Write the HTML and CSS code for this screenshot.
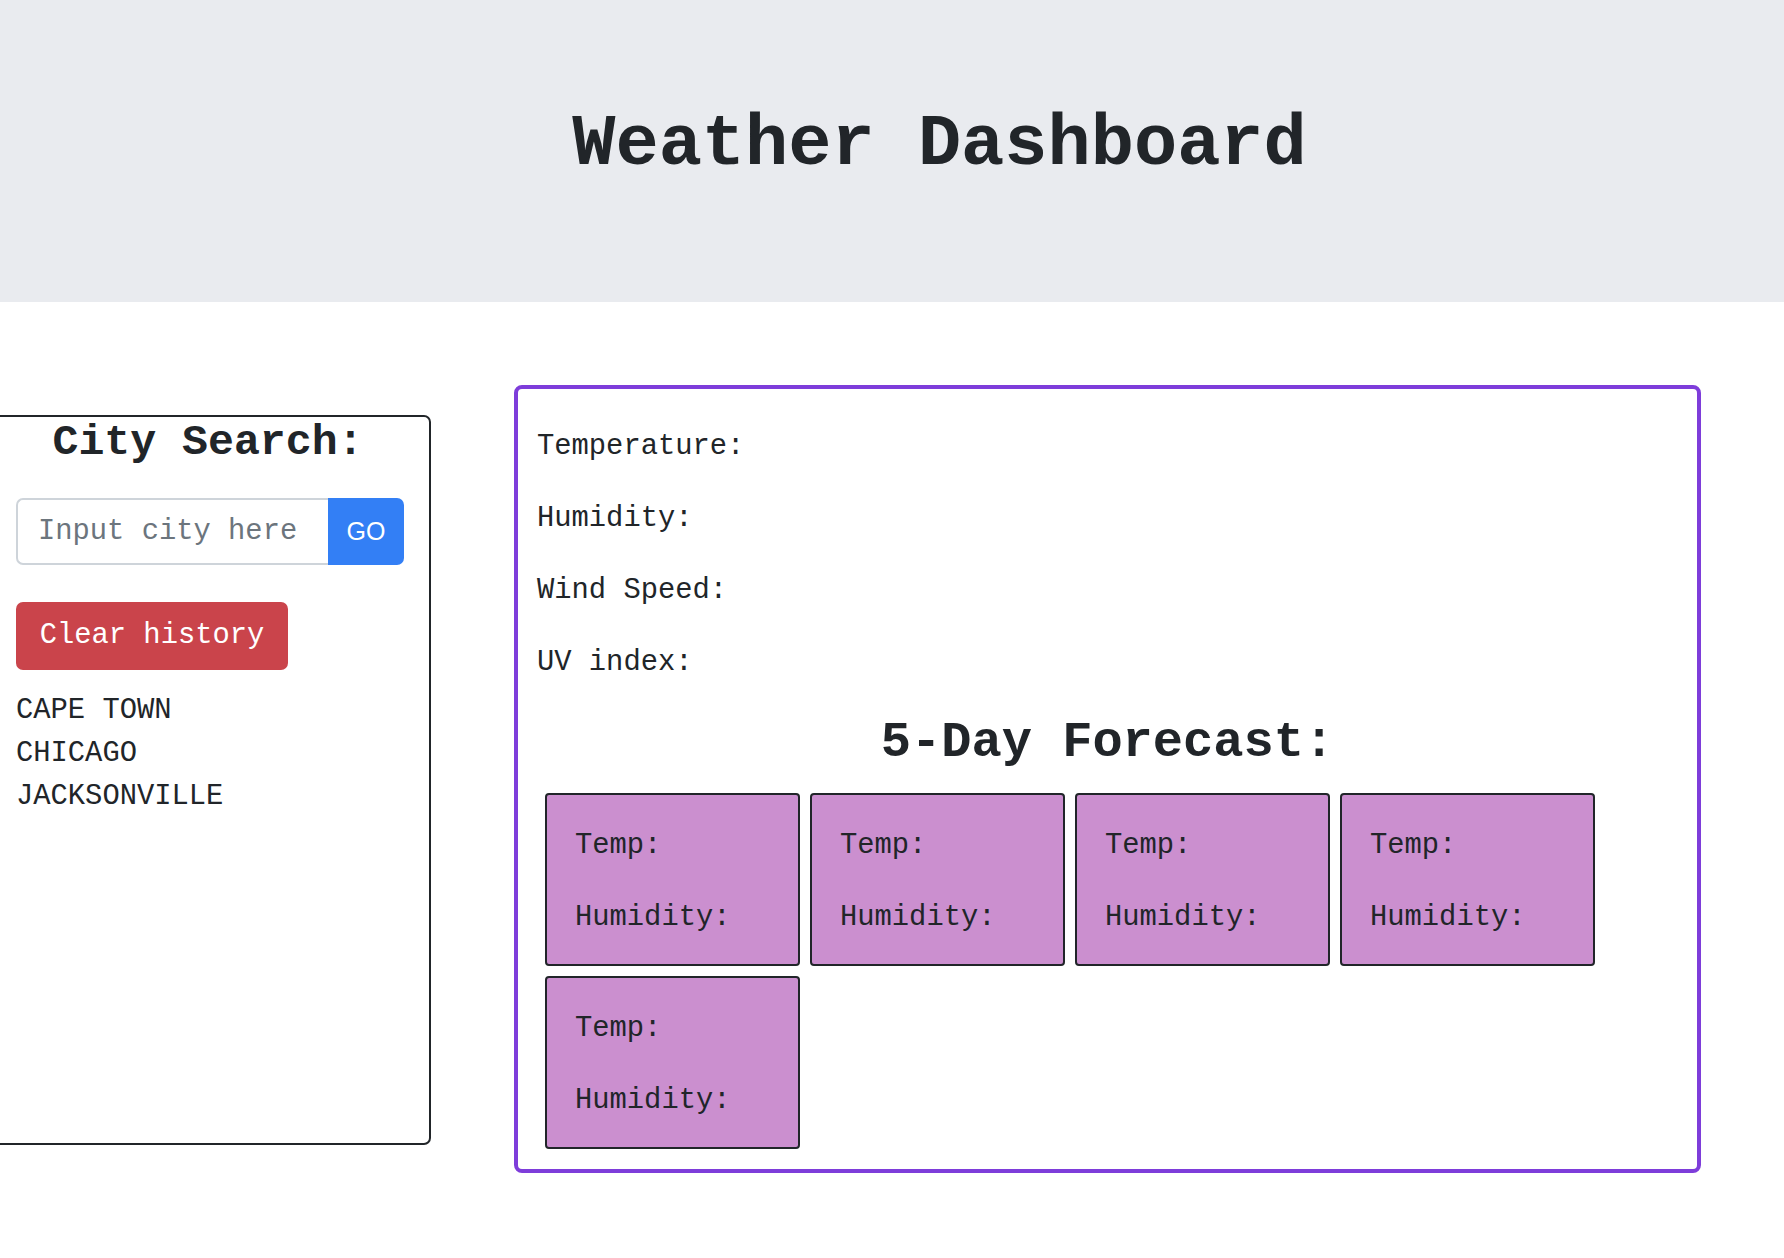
FILE: index.html
```html
<!DOCTYPE html>
<html lang="en">
<head>
<meta charset="utf-8">
<title>Weather Dashboard</title>
<link rel="stylesheet" href="styles.css">
</head>
<body>
<header class="jumbo">
  <h1 class="title">Weather Dashboard</h1>
</header>
<main class="main">
  <section class="search-panel">
    <h4 class="search-title">City Search:</h4>
    <div class="input-group">
      <input class="city-input" type="text" placeholder="Input city here">
      <button class="go-btn" type="button">GO</button>
    </div>
    <button class="clear-btn" type="button">Clear history</button>
    <ul class="history">
      <li>CAPE TOWN</li>
      <li>CHICAGO</li>
      <li>JACKSONVILLE</li>
    </ul>
  </section>
  <section class="weather-box">
    <p class="stat">Temperature:</p>
    <p class="stat">Humidity:</p>
    <p class="stat">Wind Speed:</p>
    <p class="stat">UV index:</p>
    <h3 class="forecast-title">5-Day Forecast:</h3>
    <div class="cards">
      <div class="card"><p class="stat">Temp:</p><p class="stat">Humidity:</p></div>
      <div class="card"><p class="stat">Temp:</p><p class="stat">Humidity:</p></div>
      <div class="card"><p class="stat">Temp:</p><p class="stat">Humidity:</p></div>
      <div class="card"><p class="stat">Temp:</p><p class="stat">Humidity:</p></div>
      <div class="card"><p class="stat">Temp:</p><p class="stat">Humidity:</p></div>
    </div>
  </section>
</main>
</body>
</html>
```

FILE: styles.css
```css
* { box-sizing: border-box; }
html, body { margin: 0; padding: 0; }
body {
  font-family: "Courier New", "Nimbus Mono PS", "Nimbus Mono L", "FreeMono", "Liberation Mono", monospace;
  font-size: 28.8px;
  line-height: 1.5;
  color: #212529;
  background: #fff;
  overflow: hidden;
  width: 1784px;
  height: 1258px;
}
.jumbo {
  background: #e9ebef;
  height: 302px;
  padding: 102px 0 0 95px;
}
.title {
  margin: 0;
  font-size: 72px;
  line-height: 1.2;
  font-weight: 700;
  text-align: center;
}
.main {
  display: flex;
  align-items: flex-start;
  gap: 83px;
  margin-left: -15px;
}
.search-panel {
  width: 446px;
  height: 730px;
  margin-top: 113px;
  border: 2px solid #212529;
  border-radius: 7px;
  padding: 0 0 0 29px;
}
.search-title {
  margin: 0 0 0 -29px;
  font-size: 43.2px;
  line-height: 1.2;
  font-weight: 700;
  text-align: center;
}
.input-group {
  display: flex;
  width: 388px;
  height: 67px;
  margin-top: 29px;
}
.city-input {
  flex: 1;
  min-width: 0;
  height: 67px;
  border: 2px solid #ced4da;
  border-right: none;
  border-radius: 7px 0 0 7px;
  padding: 0 20px;
  font-family: inherit;
  font-size: 28.8px;
  color: #495057;
  background: #fff;
  outline: none;
}
.city-input::placeholder { color: #6c757d; }
.go-btn {
  width: 76px;
  height: 67px;
  border: none;
  border-radius: 0 7px 7px 0;
  background: #337ff5;
  color: #fff;
  font-family: "Liberation Sans", Arial, sans-serif;
  font-size: 25px;
  padding: 0;
}
.clear-btn {
  display: block;
  margin-top: 37px;
  width: 272px;
  height: 68px;
  border: none;
  border-radius: 7px;
  background: #ca444b;
  color: #fff;
  font-family: inherit;
  font-size: 28.8px;
  padding: 0;
}
.history {
  list-style: none;
  margin: 19px 0 0;
  padding: 0;
  line-height: 43.2px;
}
.weather-box {
  width: 1187px;
  margin-top: 83px;
  border: 4px solid #7e3dda;
  border-radius: 8px;
  padding: 36px 19px 20px 19px;
}
.stat {
  margin: 0 0 28.8px;
  line-height: 43.2px;
}
.forecast-title {
  margin: 0;
  font-size: 50.4px;
  line-height: 1.2;
  font-weight: 700;
  text-align: center;
}
.cards {
  display: flex;
  flex-wrap: wrap;
  gap: 10px;
  margin: 20px 0 0 8px;
  width: 1070px;
}
.card {
  width: 255px;
  height: 173px;
  background: #cb8fcf;
  border: 2px solid #212529;
  border-radius: 4px;
  padding: 29px 0 0 28px;
}
```
